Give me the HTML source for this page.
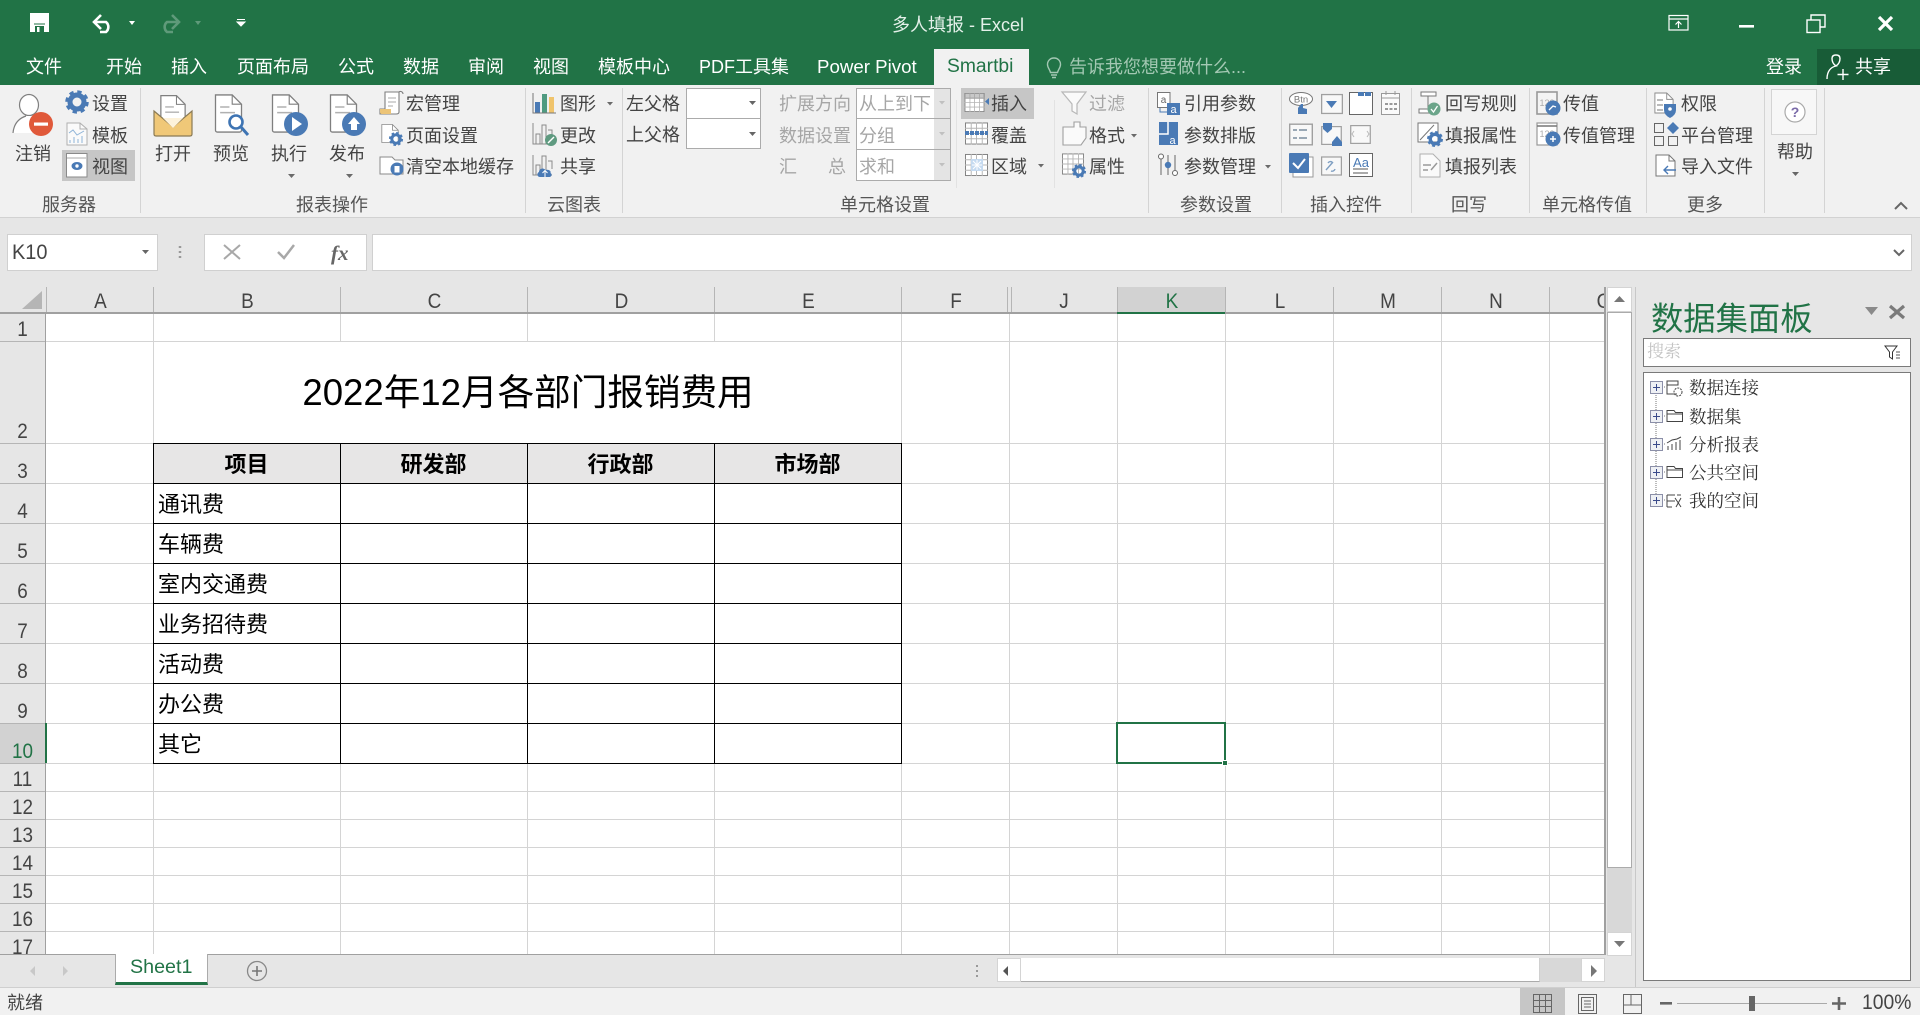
<!DOCTYPE html>
<html lang="zh-CN"><head><meta charset="utf-8"><title>多人填报 - Excel</title>
<style>
html,body{margin:0;padding:0;width:1920px;height:1015px;overflow:hidden;background:#e6e6e6}
body{position:relative;font-family:"Liberation Sans","Noto Sans CJK SC",sans-serif}
div,span{position:absolute;box-sizing:border-box}
.t{white-space:nowrap;line-height:24px;font-size:18px;color:#444;margin-top:1px}
.w{color:#fff}.g{color:#a6a6a6}
.tab{white-space:nowrap;line-height:24px;font-size:18px;color:#fff;top:55px}
.gl{top:193px;color:#555;margin-top:0}
.sep{top:88px;width:1px;height:125px;background:#d4d4d4}
.v{width:1px;background:#d4d4d4}.h{height:1px;background:#d4d4d4;left:46px;width:1558px}
.bv{width:1px;background:#000;top:443px;height:321px}.bh{height:1px;background:#000;left:153px;width:749px}
.ch{top:290px;font-size:21px;line-height:24px;color:#444;text-align:center;transform:scaleX(.9);margin-left:1px}
.rh{left:0;width:45px;font-size:21px;line-height:24px;color:#444;text-align:center;transform:scaleX(.9)}
.hs{top:287px;width:1px;height:26px;background:#b5b5b5}
.rs{left:0;width:46px;height:1px;background:#b5b5b5}
.cell{left:158px;font-size:22px;line-height:28px;color:#000;white-space:nowrap;margin-top:1px}
.hd{top:451px;font-size:22px;font-weight:bold;line-height:28px;color:#000;text-align:center;width:187px}
.tr{left:1689px;font-family:"Liberation Serif","Noto Serif CJK SC",serif;font-size:17.5px;line-height:24px;color:#333;white-space:nowrap;margin-top:1px}
.box{background:#fff;border:1px solid #ababab}
</style></head><body>
<div style="left:0;top:0;width:1920px;height:85px;background:#217346"></div>
<div style="left:1817px;top:49px;width:103px;height:36px;background:#185c37"></div>
<div style="left:934px;top:49px;width:95px;height:37px;background:#f1f1f1"></div>
<div style="left:0;top:85px;width:1920px;height:133px;background:#f1f1f1;border-bottom:1px solid #d2d2d2"></div>
<div class="t" style="left:892px;top:13px;color:#e4f0e9;margin-top:0">多人填报 - Excel</div>
<span class="tab" style="left:26px">文件</span><span class="tab" style="left:106px">开始</span><span class="tab" style="left:171px">插入</span><span class="tab" style="left:237px">页面布局</span><span class="tab" style="left:338px">公式</span><span class="tab" style="left:403px">数据</span><span class="tab" style="left:468px">审阅</span><span class="tab" style="left:533px">视图</span><span class="tab" style="left:598px">模板中心</span><span class="tab" style="left:699px">PDF工具集</span><span class="tab" style="left:817px;font-size:18.7px">Power Pivot</span>
<span class="tab" style="left:947px;color:#217346;font-size:19.3px">Smartbi</span>
<span class="tab" style="left:1069px;color:#a3c8b3">告诉我您想要做什么...</span>
<span class="tab" style="left:1766px">登录</span><span class="tab" style="left:1855px">共享</span>

<div style="left:62px;top:150px;width:73px;height:31px;background:#c6c6c6"></div>
<div style="left:961px;top:88px;width:73px;height:31px;background:#c6c6c6"></div>
<div class="sep" style="left:140px"></div><div class="sep" style="left:525px"></div><div class="sep" style="left:622px"></div><div class="sep" style="left:1148px"></div><div class="sep" style="left:1281px"></div><div class="sep" style="left:1411px"></div><div class="sep" style="left:1529px"></div><div class="sep" style="left:1646px"></div><div class="sep" style="left:1764px"></div><div class="sep" style="left:1824px"></div>
<div class="sep" style="left:1054px;height:88px;top:100px;background:#e2e2e2"></div><div class="sep" style="left:956px;height:88px;top:100px;background:#e2e2e2"></div>

<span class="t" style="left:15px;top:141px">注销</span><span class="t" style="left:92px;top:91px">设置</span><span class="t" style="left:92px;top:123px">模板</span><span class="t" style="left:92px;top:154px">视图</span>
<span class="t" style="left:155px;top:141px">打开</span><span class="t" style="left:213px;top:141px">预览</span><span class="t" style="left:271px;top:141px">执行</span><span class="t" style="left:329px;top:141px">发布</span>
<span class="t" style="left:406px;top:91px">宏管理</span><span class="t" style="left:406px;top:123px">页面设置</span><span class="t" style="left:406px;top:154px">清空本地缓存</span>
<span class="t" style="left:560px;top:91px">图形</span><span class="t" style="left:560px;top:123px">更改</span><span class="t" style="left:560px;top:154px">共享</span>
<span class="t" style="left:626px;top:91px">左父格</span><span class="t" style="left:626px;top:122px">上父格</span>
<div class="box" style="left:686px;top:88px;width:75px;height:31px"></div><div class="box" style="left:686px;top:118px;width:75px;height:31px"></div>
<span class="t g" style="left:779px;top:91px">扩展方向</span><span class="t g" style="left:779px;top:123px">数据设置</span><span class="t g" style="left:779px;top:154px">汇</span><span class="t g" style="left:828px;top:154px">总</span>
<div class="box" style="left:856px;top:88px;width:95px;height:31px;background:linear-gradient(90deg,#fff 0,#fff 83%,#e4e4e4 83%)"></div>
<div class="box" style="left:856px;top:118px;width:95px;height:32px;background:linear-gradient(90deg,#fff 0,#fff 83%,#e4e4e4 83%)"></div>
<div class="box" style="left:856px;top:149px;width:95px;height:32px;background:linear-gradient(90deg,#fff 0,#fff 83%,#e4e4e4 83%)"></div>
<span class="t g" style="left:859px;top:91px">从上到下</span><span class="t g" style="left:859px;top:123px">分组</span><span class="t g" style="left:859px;top:154px">求和</span>
<span class="t" style="left:991px;top:91px">插入</span><span class="t" style="left:991px;top:123px">覆盖</span><span class="t" style="left:991px;top:154px">区域</span>
<span class="t g" style="left:1089px;top:91px">过滤</span><span class="t" style="left:1089px;top:123px">格式</span><span class="t" style="left:1089px;top:154px">属性</span>
<span class="t" style="left:1184px;top:91px">引用参数</span><span class="t" style="left:1184px;top:123px">参数排版</span><span class="t" style="left:1184px;top:154px">参数管理</span>
<span class="t" style="left:1445px;top:91px">回写规则</span><span class="t" style="left:1445px;top:123px">填报属性</span><span class="t" style="left:1445px;top:154px">填报列表</span>
<span class="t" style="left:1563px;top:91px">传值</span><span class="t" style="left:1563px;top:123px">传值管理</span>
<span class="t" style="left:1681px;top:91px">权限</span><span class="t" style="left:1681px;top:123px">平台管理</span><span class="t" style="left:1681px;top:154px">导入文件</span>
<div style="left:1771px;top:89px;width:46px;height:46px;background:#f7f7f7;border:1px solid #d4d4d4"></div>
<span class="t" style="left:1777px;top:139px">帮助</span>
<span class="t gl" style="left:42px">服务器</span><span class="t gl" style="left:296px">报表操作</span><span class="t gl" style="left:547px">云图表</span><span class="t gl" style="left:840px">单元格设置</span><span class="t gl" style="left:1180px">参数设置</span><span class="t gl" style="left:1310px">插入控件</span><span class="t gl" style="left:1451px">回写</span><span class="t gl" style="left:1542px">单元格传值</span><span class="t gl" style="left:1687px">更多</span>

<!-- formula bar -->
<div class="box" style="left:7px;top:234px;width:151px;height:37px;background:#fff;border-color:#d0d0d0"></div>
<span class="t" style="left:12px;top:240px;font-size:21px;color:#444;transform:scaleX(.95);transform-origin:left">K10</span>
<div class="box" style="left:204px;top:234px;width:163px;height:37px;border-color:#d0d0d0"></div>
<div class="box" style="left:372px;top:234px;width:1540px;height:37px;border-color:#d0d0d0"></div>
<span class="t" style="left:331px;top:240px;font-family:'Liberation Serif',serif;font-style:italic;font-weight:bold;font-size:21px;color:#666">fx</span>

<!-- sheet -->
<div style="left:0;top:287px;width:1606px;height:26px;background:#e6e6e6"></div>
<div style="left:46px;top:313px;width:1558px;height:641px;background:#fff"></div>
<div style="left:0;top:313px;width:46px;height:641px;background:#e6e6e6"></div>
<div style="left:153px;top:443px;width:748px;height:40px;background:#e7e6e6"></div>
<div style="left:1117px;top:287px;width:108px;height:26px;background:#d2d2d2"></div>
<div style="left:0;top:723px;width:46px;height:40px;background:#d2d2d2"></div>

<div class="v" style="left:153px;top:313px;height:641px"></div>
<div class="v" style="left:340px;top:313px;height:28px"></div><div class="v" style="left:340px;top:443px;height:511px"></div>
<div class="v" style="left:527px;top:313px;height:28px"></div><div class="v" style="left:527px;top:443px;height:511px"></div>
<div class="v" style="left:714px;top:313px;height:28px"></div><div class="v" style="left:714px;top:443px;height:511px"></div>
<div class="v" style="left:901px;top:313px;height:641px"></div><div class="v" style="left:1009px;top:313px;height:641px"></div><div class="v" style="left:1117px;top:313px;height:641px"></div><div class="v" style="left:1225px;top:313px;height:641px"></div><div class="v" style="left:1333px;top:313px;height:641px"></div><div class="v" style="left:1441px;top:313px;height:641px"></div><div class="v" style="left:1549px;top:313px;height:641px"></div>
<div class="h" style="top:341px"></div><div class="h" style="top:443px"></div><div class="h" style="top:483px"></div><div class="h" style="top:523px"></div><div class="h" style="top:563px"></div><div class="h" style="top:603px"></div><div class="h" style="top:643px"></div><div class="h" style="top:683px"></div><div class="h" style="top:723px"></div><div class="h" style="top:763px"></div><div class="h" style="top:791px"></div><div class="h" style="top:819px"></div><div class="h" style="top:847px"></div><div class="h" style="top:875px"></div><div class="h" style="top:903px"></div><div class="h" style="top:931px"></div>

<div class="bv" style="left:153px"></div><div class="bv" style="left:340px"></div><div class="bv" style="left:527px"></div><div class="bv" style="left:714px"></div><div class="bv" style="left:901px"></div>
<div class="bh" style="top:443px"></div><div class="bh" style="top:483px"></div><div class="bh" style="top:523px"></div><div class="bh" style="top:563px"></div><div class="bh" style="top:603px"></div><div class="bh" style="top:643px"></div><div class="bh" style="top:683px"></div><div class="bh" style="top:723px"></div><div class="bh" style="top:763px"></div>

<!-- header separators -->
<div class="hs" style="left:46px"></div><div class="hs" style="left:153px"></div><div class="hs" style="left:340px"></div><div class="hs" style="left:527px"></div><div class="hs" style="left:714px"></div><div class="hs" style="left:901px"></div><div class="hs" style="left:1007px"></div><div class="hs" style="left:1011px"></div><div class="hs" style="left:1117px"></div><div class="hs" style="left:1225px"></div><div class="hs" style="left:1333px"></div><div class="hs" style="left:1441px"></div><div class="hs" style="left:1549px"></div>
<div class="rs" style="top:341px"></div><div class="rs" style="top:443px"></div><div class="rs" style="top:483px"></div><div class="rs" style="top:523px"></div><div class="rs" style="top:563px"></div><div class="rs" style="top:603px"></div><div class="rs" style="top:643px"></div><div class="rs" style="top:683px"></div><div class="rs" style="top:723px"></div><div class="rs" style="top:763px"></div><div class="rs" style="top:791px"></div><div class="rs" style="top:819px"></div><div class="rs" style="top:847px"></div><div class="rs" style="top:875px"></div><div class="rs" style="top:903px"></div><div class="rs" style="top:931px"></div>
<div style="left:0;top:312px;width:1606px;height:2px;background:#a0a0a0"></div>
<div style="left:45px;top:313px;width:1px;height:641px;background:#a0a0a0"></div>
<div style="left:1117px;top:312px;width:108px;height:2px;background:#217346"></div>
<div style="left:45px;top:723px;width:2px;height:40px;background:#217346"></div>

<span class="ch" style="left:46px;width:107px">A</span><span class="ch" style="left:153px;width:187px">B</span><span class="ch" style="left:340px;width:187px">C</span><span class="ch" style="left:527px;width:187px">D</span><span class="ch" style="left:714px;width:187px">E</span><span class="ch" style="left:901px;width:108px">F</span><span class="ch" style="left:1009px;width:108px">J</span><span class="ch" style="left:1117px;width:108px;color:#217346">K</span><span class="ch" style="left:1225px;width:108px">L</span><span class="ch" style="left:1333px;width:108px">M</span><span class="ch" style="left:1441px;width:108px">N</span>
<div style="left:1590px;top:288px;width:16px;height:24px;overflow:hidden"><span class="ch" style="left:0;top:2px;width:26px">O</span></div>
<span class="rh" style="top:318px">1</span><span class="rh" style="top:420px">2</span><span class="rh" style="top:460px">3</span><span class="rh" style="top:500px">4</span><span class="rh" style="top:540px">5</span><span class="rh" style="top:580px">6</span><span class="rh" style="top:620px">7</span><span class="rh" style="top:660px">8</span><span class="rh" style="top:700px">9</span><span class="rh" style="top:740px;color:#217346">10</span><span class="rh" style="top:768px">11</span><span class="rh" style="top:796px">12</span><span class="rh" style="top:824px">13</span><span class="rh" style="top:852px">14</span><span class="rh" style="top:880px">15</span><span class="rh" style="top:908px">16</span>
<div style="left:0;top:935px;width:45px;height:19px;overflow:hidden"><span class="rh" style="top:1px">17</span></div>

<div style="left:154px;top:367px;width:748px;text-align:center;font-size:36.6px;line-height:52px;color:#000;white-space:nowrap">2022年12月各部门报销费用</div>
<span class="hd" style="left:153px">项目</span><span class="hd" style="left:340px">研发部</span><span class="hd" style="left:527px">行政部</span><span class="hd" style="left:714px">市场部</span>
<span class="cell" style="top:490px">通讯费</span><span class="cell" style="top:530px">车辆费</span><span class="cell" style="top:570px">室内交通费</span><span class="cell" style="top:610px">业务招待费</span><span class="cell" style="top:650px">活动费</span><span class="cell" style="top:690px">办公费</span><span class="cell" style="top:730px">其它</span>

<div style="left:1116px;top:722px;width:110px;height:42px;border:2px solid #217346"></div>
<div style="left:1222px;top:760px;width:6px;height:6px;background:#217346;border:1px solid #fff"></div>

<!-- scrollbars -->
<div style="left:1604px;top:287px;width:2px;height:668px;background:#a0a0a0"></div>
<div style="left:1607px;top:287px;width:25px;height:25px;background:#fff;border:1px solid #d4d4d4"></div>
<div style="left:1607px;top:312px;width:25px;height:556px;background:#fff;border:1px solid #ababab"></div>
<div style="left:1607px;top:868px;width:25px;height:64px;background:#d8d8d8"></div>
<div style="left:1607px;top:932px;width:25px;height:24px;background:#fff;border:1px solid #d4d4d4"></div>
<div style="left:1635px;top:287px;width:1px;height:700px;background:#c8c8c8"></div>

<!-- panel -->
<div style="left:1651px;top:299px;font-size:32.3px;line-height:40px;color:#217346;white-space:nowrap">数据集面板</div>
<div style="left:1643px;top:338px;width:268px;height:29px;background:#fff;border:1px solid #7a7a7a"></div>
<span class="t" style="left:1647px;top:338px;font-size:17px;color:#c4c4c4;font-family:'Noto Serif CJK SC',serif;margin-top:0">搜索</span>
<div style="left:1643px;top:372px;width:268px;height:609px;background:#fff;border:1px solid #7a7a7a"></div>
<span class="tr" style="top:375px">数据连接</span><span class="tr" style="top:404px">数据集</span><span class="tr" style="top:432px">分析报表</span><span class="tr" style="top:460px">公共空间</span><span class="tr" style="top:488px">我的空间</span>

<!-- sheet tabs -->
<div style="left:0;top:954px;width:1606px;height:1px;background:#a0a0a0"></div>
<div style="left:115px;top:954px;width:93px;height:31px;background:#fff;border-left:1px solid #ababab;border-right:1px solid #ababab;border-bottom:3px solid #217346"></div>
<span class="t" style="left:130px;top:954px;font-size:19.7px;color:#217346">Sheet1</span>
<div style="left:997px;top:958px;width:24px;height:24px;background:#fff;border:1px solid #d4d4d4"></div>
<div style="left:1021px;top:958px;width:519px;height:24px;background:#fff;border-bottom:1px solid #ababab;border-right:1px solid #d0d0d0"></div>
<div style="left:1540px;top:958px;width:41px;height:24px;background:#d8d8d8"></div>
<div style="left:1581px;top:958px;width:24px;height:24px;background:#fff;border:1px solid #d4d4d4"></div>

<!-- status -->
<div style="left:0;top:987px;width:1920px;height:28px;background:#f1f1f1;border-top:1px solid #cfcfcf"></div>
<span class="t" style="left:7px;top:990px">就绪</span>
<div style="left:1520px;top:988px;width:45px;height:27px;background:#c6c6c6"></div>
<span class="t" style="left:1862px;top:990px;font-size:21px;color:#444;transform:scaleX(.92);transform-origin:left">100%</span>

<svg width="1920" height="1015" viewBox="0 0 1920 1015" style="position:absolute;left:0;top:0;pointer-events:none" fill="none">
<defs>
<g id="gear"><circle r="7" stroke="#4a7ab5" stroke-width="5"/><circle r="10" stroke="#4a7ab5" stroke-width="3.5" stroke-dasharray="4.2 3.65"/></g>
<symbol id="doc" viewBox="0 0 30 42"><path d="M1 1H19L29 11V39a2 2 0 0 1-2 2H3a2 2 0 0 1-2-2Z" fill="#fff" stroke="#7f7f7f" stroke-width="1.4"/><path d="M19 1V11H29" stroke="#7f7f7f" stroke-width="1.2"/><path d="M6 14H16M6 20H22" stroke="#b0b0b0" stroke-width="1.6"/></symbol>
<symbol id="sdoc" viewBox="0 0 22 24"><path d="M1 1H14L21 8V23H1Z" fill="#fff" stroke="#8a8a8a"/><path d="M14 1V8H21" stroke="#8a8a8a"/></symbol>
<symbol id="tbl" viewBox="0 0 24 23"><rect x=".5" y=".5" width="23" height="22" fill="#fff" stroke="#7f7f7f"/><path d="M6.5 0V23M12 0V23M18 0V23M0 6H24M0 11.5H24M0 17H24" stroke="#b5b5b5"/></symbol>
<symbol id="ctl" viewBox="0 0 24 22"><rect x=".7" y=".7" width="22.6" height="20.6" fill="#f8f8f8" stroke="#a0a0a0" stroke-width="1.4"/></symbol>
</defs>
<!-- QAT -->
<path d="M30 13H49V32H30Z" fill="#fff"/><path d="M35 26H44V32H35Z" fill="#217346"/><rect x="37" y="27" width="2.5" height="5" fill="#fff"/><path d="M34 24H45" stroke="#217346" stroke-width="1"/>
<path d="M101 15L94 22L101 29M95 22H106a6.5 6.5 0 0 1 0 10H100" stroke="#fff" stroke-width="2.6"/>
<path d="M129 21h6l-3 4Z" fill="#fff"/>
<path d="M172 15L179 22L172 29M178 22H167a6.5 6.5 0 0 0 0 10H173" stroke="#5f9a7a" stroke-width="2.6"/>
<path d="M195 21h6l-3 4Z" fill="#5f9a7a"/>
<path d="M237 19.5h8M237 22h8l-4 4Z" stroke="#fff" stroke-width="1" fill="#fff"/>
<!-- window -->
<rect x="1669" y="15.5" width="19" height="14.5" stroke="#fff" stroke-width="1.2"/><path d="M1669 19H1688M1678.5 28V21.5M1675.5 24.5L1678.5 21.5L1681.5 24.5" stroke="#fff" stroke-width="1.2"/>
<rect x="1739" y="25" width="15" height="2.6" fill="#fff"/>
<rect x="1807" y="20" width="13" height="12.5" stroke="#fff" stroke-width="1.4"/><path d="M1811 20V15H1825V27H1820" stroke="#fff" stroke-width="1.4"/>
<path d="M1879 17L1892 30M1892 17L1879 30" stroke="#fff" stroke-width="3.2"/>
<path d="M1827 79c0-8 4-12 9-13c-3-2-4-5-4-7.500c0-3 2-3.500 4-3.500c2 0 4 .5 4 3.500c0 2.500-1 5.500-4 7.500M1843 69V80M1837.500 74.500H1848.500" stroke="#fff" stroke-width="1.4"/>
<!-- bulb -->
<path d="M1054 58c-4 0-6.500 3-6.500 6.500c0 3 2 4.500 3 8h7c1-3.500 3-5 3-8c0-3.500-2.500-6.500-6.500-6.500ZM1051 75H1057M1052 77.500H1056" stroke="#a3c8b3" stroke-width="1.4"/>
<!-- 注销 -->
<ellipse cx="29" cy="105" rx="9.500" ry="10.500" fill="#fff" stroke="#7f7f7f" stroke-width="1.2"/>
<path d="M13 133C14 122 20 118 26 116H34C38 117 42 120 44 125V133Z" fill="#fff"/><path d="M13 133C14 122 20 118 26 116M34 116L40 119" stroke="#7f7f7f" stroke-width="1.2"/>
<circle cx="41" cy="124" r="12" fill="#e0593a"/><rect x="34" y="122.500" width="14" height="3.200" fill="#fff"/>
<use href="#gear" x="77" y="102"/>
<path d="M67 123H80L87 129V145H67Z" fill="#fafafa" stroke="#b0b0b0"/><path d="M80 123V129H87" stroke="#b0b0b0"/><path d="M69 133L73 130L77 135L84 131M70 143V140M74 143V137M78 143V139M82 143V136" stroke="#8fb4d8"/>
<rect x="66.500" y="153.500" width="20.500" height="23.500" fill="#fff" stroke="#8a8a8a"/><path d="M67 158H86" stroke="#aaa"/><ellipse cx="77" cy="166" rx="5.500" ry="4" fill="#4a7ab5"/><circle cx="77" cy="166" r="1.700" fill="#fff"/>
<!-- 打开 -->
<use href="#doc" x="160" y="94" width="26" height="38"/>
<path d="M154 111L173 127L192 111V134Q192 136 190 136H156Q154 136 154 134Z" fill="#f0c878" stroke="#8a7a55" stroke-width="1.2"/><path d="M163 118H183L173 128Z" fill="#fdf2da"/>
<!-- 预览 -->
<use href="#doc" x="213" y="94" width="31" height="39"/><circle cx="236" cy="122" r="6.500" fill="#fff" stroke="#3e74b3" stroke-width="2.600"/><path d="M241 127L248 135" stroke="#3e74b3" stroke-width="3"/>
<!-- 执行 -->
<use href="#doc" x="270" y="94" width="31" height="39"/><circle cx="296" cy="124" r="12" fill="#4a7ab5"/><path d="M292 117L302 124L292 131Z" fill="#fff"/>
<path d="M288 174h7l-3.500 4Z" fill="#6a6a6a"/>
<!-- 发布 -->
<use href="#doc" x="328" y="94" width="31" height="39"/><circle cx="354" cy="124" r="12" fill="#4a7ab5"/><path d="M348 124L354 117L360 124H357V130H351V124Z" fill="#fff"/>
<path d="M346 174h7l-3.500 4Z" fill="#6a6a6a"/>
<!-- 宏/页/清 -->
<path d="M385 92H399V112Q399 114 396 114H380V109H385ZM399 92a2.500 2.500 0 0 1 4 2" fill="#fff" stroke="#7f7f7f" stroke-width="1.100"/><path d="M388 98H396M388 102H396M388 106H393" stroke="#aaa"/><path d="M380 109H391V114H382Q380 114 380 112Z" fill="#ecc477"/>
<use href="#sdoc" x="381" y="122" width="18" height="23"/><use href="#gear" transform="translate(396 139) scale(.6)"/>
<path d="M380 157H392L395 160H403V174H380Z" fill="#fff" stroke="#8a8a8a"/><circle cx="397" cy="169" r="6.500" fill="#4a7ab5"/><rect x="394.500" y="166" width="5" height="6.500" fill="#fff"/>
<!-- 图形 -->
<rect x="535" y="102" width="5" height="11" fill="#4a7ab5"/><rect x="542" y="94" width="5" height="19" fill="#4f9a80"/><rect x="549" y="97" width="5" height="16" fill="#f0c46c"/><path d="M533 93V113H556" stroke="#777"/>
<path d="M607 102h6l-3 3.500Z" fill="#6a6a6a"/>
<path d="M533 123V144H552M536 134h4v10h-4zM542 125h4v19h-4zM548 130h4v10" stroke="#8a8a8a"/><circle cx="551" cy="140" r="6" fill="#5f9a80"/><path d="M548 143L554 137" stroke="#fff" stroke-width="1.400"/>
<path d="M533 155V175H552M536 165h4v10h-4zM542 156h4v19h-4zM548 161h4v8" stroke="#8a8a8a"/><path d="M540 177c-3 0-3.500-4-1-5c0-3 4-5 6.500-2c3-1 6 1 5 3c2 1 1 4-1 4Z" fill="#4a7ab5"/><path d="M545 177V171M542.500 173L545 170.500L547.500 173" stroke="#fff"/>
<!-- combos carets -->
<path d="M749 101h7l-3.500 4ZM749 132h7l-3.500 4Z" fill="#666"/>
<path d="M939 101h6l-3 3.500ZM939 132h6l-3 3.500ZM939 163h6l-3 3.500Z" fill="#c0c0c0"/>
<!-- 插入 group -->
<use href="#tbl" x="964" y="93" width="21" height="19"/><rect x="964" y="93" width="21" height="6" fill="#9a9a9a" opacity=".55"/><path d="M989 98V105L985 101.500Z" fill="#4a7ab5"/>
<use href="#tbl" x="965" y="122" width="23" height="23"/><path d="M965 133H988" stroke="#4a7ab5" stroke-width="4" stroke-dasharray="4 1"/>
<use href="#tbl" x="965" y="153" width="23" height="24"/><rect x="971" y="159" width="12" height="12" fill="#c5daf0"/><path d="M977 160V170M972 165H982M973 161L981 169M981 161L973 169" stroke="#fff"/>
<path d="M1038 164h6l-3 3.500Z" fill="#6a6a6a"/>
<path d="M1062 92H1086L1077 104V114L1072 111V104Z" fill="#fafafa" stroke="#b8b8b8" stroke-width="1.200"/>
<path d="M1063 145V127H1074V122H1080V127H1086V138L1081 145Z" fill="#fafafa" stroke="#a0a0a0" stroke-width="1.100"/>
<use href="#tbl" x="1062" y="153" width="22" height="22"/><use href="#gear" transform="translate(1079 171) scale(.6)"/>
<path d="M1131 134h6l-3 3.500Z" fill="#6a6a6a"/>
<!-- 参数 -->
<rect x="1157.500" y="92.500" width="12.500" height="15" fill="#fff" stroke="#777"/><path d="M1160 108V112H1167" stroke="#4a7ab5"/><rect x="1167" y="103" width="13" height="12" fill="#4a7ab5"/>
<text x="1163.500" y="103" text-anchor="middle" font-family="Liberation Sans" font-size="10" fill="#666">a</text><text x="1173.500" y="113" text-anchor="middle" font-family="Liberation Sans" font-size="11" fill="#fff">a</text>
<rect x="1159" y="122" width="19" height="23" fill="#4a7ab5"/><path d="M1159 134H1168V122" stroke="#fff" stroke-width="1.500"/><path d="M1168 128H1178" stroke="#fff" stroke-width="0"/><text x="1172.500" y="144" text-anchor="middle" font-family="Liberation Sans" font-size="11" fill="#fff">a</text>
<path d="M1161 159V175M1168 155V175M1175 155V170" stroke="#666"/><circle cx="1161" cy="156.500" r="2.500" fill="#fff" stroke="#666"/><circle cx="1168" cy="165" r="3.200" fill="#4a7ab5"/><circle cx="1175" cy="173" r="2.500" fill="#fff" stroke="#666"/>
<path d="M1265 165h6l-3 3.500Z" fill="#6a6a6a"/>
<!-- 控件 -->
<ellipse cx="1301" cy="99" rx="11.500" ry="6.500" fill="#fff" stroke="#777"/><text x="1301" y="102.500" text-anchor="middle" font-family="Liberation Sans" font-size="9.500" fill="#777">Btn</text><path d="M1298 114V108L1301 104H1303V108L1307 109V114Z" fill="#4a7ab5"/>
<use href="#ctl" x="1321" y="93" width="22" height="22"/><path d="M1326 101h11l-5.500 7Z" fill="#4a7ab5"/>
<rect x="1349.500" y="92.500" width="23" height="22" fill="#fff" stroke="#666"/><rect x="1358" y="92" width="6" height="4" fill="#4a7ab5"/><rect x="1365" y="92" width="6" height="4" fill="#4a7ab5"/>
<rect x="1381.500" y="93.500" width="18" height="21" fill="#fafafa" stroke="#999"/><path d="M1381 98H1400M1386 91V95M1395 91V95" stroke="#999"/><path d="M1385 104h3M1389.500 104h3M1394 104h3M1385 109h3M1389.500 109h3M1394 109h3" stroke="#999" stroke-width="2"/>
<use href="#ctl" x="1289" y="123" width="24" height="23"/><path d="M1293 130h4M1299 130h8M1293 138h4M1299 138h8" stroke="#9aa8b5" stroke-width="2"/>
<use href="#ctl" x="1320" y="126" width="23" height="19"/><path d="M1323 123h9v6l-4.500 4l-4.500-4ZM1332 142l5-6l5 6v4h-10Z" fill="#4a7ab5"/>
<use href="#ctl" x="1349" y="125" width="23" height="19"/><path d="M1354 131l-2 3l2 3M1367 131l-0 0M1367 131l2 3l-2 3" stroke="#bbb"/>
<rect x="1293" y="157" width="20" height="20" fill="#fff" stroke="#999"/><rect x="1289" y="153" width="20" height="20" rx="1" fill="#4a7ab5"/><path d="M1293 163L1298 168L1305 159" stroke="#fff" stroke-width="2"/>
<use href="#ctl" x="1321" y="155" width="21" height="22"/><path d="M1326 170l7-8M1328 163a3 3 0 0 1 4-1M1331 171a3 3 0 0 0 4-2" stroke="#7f9fc2" stroke-width="1.400"/>
<rect x="1349.500" y="153.500" width="23" height="23" fill="#fff" stroke="#666"/><path d="M1353 169h15M1353 173h15" stroke="#555"/><text x="1361" y="167" text-anchor="middle" font-family="Liberation Sans" font-size="13" fill="#4a7ab5">Aa</text>
<!-- 回写 -->
<path d="M1421 92H1436V96H1421ZM1428 96V108M1419 109H1438V113H1419Z" stroke="#777" fill="#fff"/><circle cx="1434" cy="109" r="6.500" fill="#6ba58a"/><path d="M1431 109L1433.500 112L1437.500 106" stroke="#fff" stroke-width="1.300"/>
<path d="M1418 123H1438V142H1418ZM1420 140L1434 125" stroke="#777" fill="#fff"/><use href="#gear" transform="translate(1435 139) scale(.68)"/>
<path d="M1420 154H1433L1440 161V177H1420Z" fill="#fafafa" stroke="#b0b0b0"/><path d="M1423 165h8M1423 170h5M1431 170l6-7" stroke="#999" stroke-width="1.500"/>
<rect x="1537" y="92" width="20" height="22" fill="#f4f4f4" stroke="#999" stroke-width="1.600"/><text x="1547" y="106" text-anchor="middle" font-family="Liberation Sans" font-size="9" fill="#aaa">123</text><circle cx="1553" cy="108" r="7.500" fill="#4a7ab5"/><path d="M1549 110l4-4l3 1" stroke="#fff" stroke-width="1.300"/>
<rect x="1537" y="123" width="20" height="22" fill="#fff" stroke="#999" stroke-width="1.200"/><path d="M1537 126H1557" stroke="#777" stroke-width="1.500"/><text x="1547" y="137" text-anchor="middle" font-family="Liberation Sans" font-size="9" fill="#aaa">123</text><circle cx="1553" cy="139" r="7.500" fill="#4a7ab5"/><path d="M1550 139H1556M1553 136V142" stroke="#fff" stroke-width="1.500"/>
<!-- 更多 -->
<use href="#sdoc" x="1654" y="92" width="20" height="22"/><path d="M1657 100h6M1657 105h6M1657 110h6" stroke="#777"/><path d="M1664 104h12v6q0 5-6 8q-6-3-6-8Z" fill="#4a7ab5"/><circle cx="1670" cy="109" r="1.800" fill="#fff"/>
<rect x="1654.500" y="123.500" width="9" height="9" stroke="#666"/><path d="M1673 122l6 6l-6 6l-6-6Z" fill="#4a7ab5"/><rect x="1654.500" y="136.500" width="9" height="9" stroke="#666"/><rect x="1668.500" y="136.500" width="9" height="9" stroke="#666"/>
<path d="M1656 155H1669L1675 161V176H1656Z" fill="#fff" stroke="#777"/><path d="M1669 155V161H1675" stroke="#777"/><path d="M1676 170H1664M1668 166L1664 170L1668 174" stroke="#4a7ab5" stroke-width="1.400"/>
<!-- help -->
<circle cx="1795" cy="112" r="10" fill="#fff" stroke="#aaa" stroke-width="1.200"/><text x="1795" y="117" text-anchor="middle" font-family="Liberation Sans" font-size="14" font-weight="bold" fill="#7a6aa8">?</text>
<path d="M1792 172h7l-3.500 4Z" fill="#666"/>
<path d="M1895 209L1901 203L1907 209" stroke="#666" stroke-width="2"/>
<!-- formula -->
<path d="M142 250h7l-3.500 4Z" fill="#666"/>
<path d="M180 246v2M180 251v2M180 256v2" stroke="#999" stroke-width="2.500"/>
<path d="M224 245L240 259M240 245L224 259" stroke="#a8a8a8" stroke-width="2"/>
<path d="M278 252L284 258L294 245" stroke="#a8a8a8" stroke-width="2.500"/>
<path d="M1894 250L1899 255L1904 250" stroke="#666" stroke-width="2"/>
<!-- corner -->
<path d="M42 291V309H22Z" fill="#b5b5b5"/>
<!-- scroll arrows -->
<path d="M1614 302L1619.500 296L1625 302Z" fill="#777"/>
<path d="M1614 941L1619.500 947L1625 941Z" fill="#777"/>
<path d="M1008 966V976L1003 971Z" fill="#555"/>
<path d="M1591 965V977L1597 971Z" fill="#777"/>
<path d="M35 966V976L30 971ZM63 966V976L68 971Z" fill="#c8c8c8"/>
<path d="M977 965v2M977 970v2M977 975v2" stroke="#999" stroke-width="2"/>
<circle cx="257" cy="971" r="9.500" stroke="#888" stroke-width="1.300"/><path d="M252 971H262M257 966V976" stroke="#777" stroke-width="1.600"/>
<!-- panel -->
<path d="M1865 307h13l-6.500 8Z" fill="#8a8a8a"/>
<path d="M1890 306L1904 318M1904 306L1890 318" stroke="#7a7a7a" stroke-width="3.200"/>
<path d="M1885 346H1897L1892.500 352V359L1889.500 357V352Z" stroke="#333"/><path d="M1896 352h4M1896 355h4M1896 358h4" stroke="#555"/>
<path d="M1656 393V495M1662 387h4M1662 416h4M1662 444h4M1662 472h4M1662 500h4" stroke="#777" stroke-dasharray="1 1"/>
<g stroke="#8b8fa8" fill="#eef0f4"><rect x="1650.500" y="381.500" width="12" height="12"/><rect x="1650.500" y="410.500" width="12" height="12"/><rect x="1650.500" y="438.500" width="12" height="12"/><rect x="1650.500" y="466.500" width="12" height="12"/><rect x="1650.500" y="494.500" width="12" height="12"/></g>
<path d="M1653 387.500h7M1656.500 384v7M1653 416.500h7M1656.500 413v7M1653 444.500h7M1656.500 441v7M1653 472.500h7M1656.500 469v7M1653 500.500h7M1656.500 497v7" stroke="#3a4a8a"/>
<path d="M1667 381h11v4h-11zM1667 385v9h10" stroke="#444"/><circle cx="1678" cy="392" r="4" stroke="#444" stroke-dasharray="2 1"/>
<path d="M1667 410.500h7l1.500 2h7v9h-15.500ZM1667 414h15.500M1667 466.500h7l1.500 2h7v9h-15.500ZM1667 470h15.500" stroke="#444"/>
<path d="M1668 450v-4M1672 450v-6M1676 450v-8M1680 450v-10M1667 443l5-3l5-1l4-2" stroke="#444"/>
<path d="M1667 495h8M1667 495v12M1667 501h8M1667 507h5M1675 498l6 9M1681 498l-5 9M1681 495h-4" stroke="#444"/>
<!-- status icons -->
<path d="M1533.500 994.500h18v18h-18zM1539.500 994v18M1545.500 994v18M1533 1000.500h18M1533 1006.500h18" stroke="#666"/>
<rect x="1578.500" y="994.500" width="18" height="19" stroke="#666"/><rect x="1581.500" y="997.500" width="12" height="13" stroke="#666"/><path d="M1584 1001h7M1584 1004h7M1584 1007h7" stroke="#666"/>
<rect x="1623.500" y="994.500" width="18" height="19" stroke="#666"/><path d="M1631 994.500V1005H1641M1623 1005H1631" stroke="#666"/>
<rect x="1660" y="1002" width="12" height="2.600" fill="#666"/>
<rect x="1677" y="1003" width="150" height="1" fill="#aaa"/>
<rect x="1749" y="996" width="6" height="15" fill="#666"/>
<path d="M1832 1003.500H1846M1839 997V1010" stroke="#666" stroke-width="2.600"/>
</svg>
</body></html>
